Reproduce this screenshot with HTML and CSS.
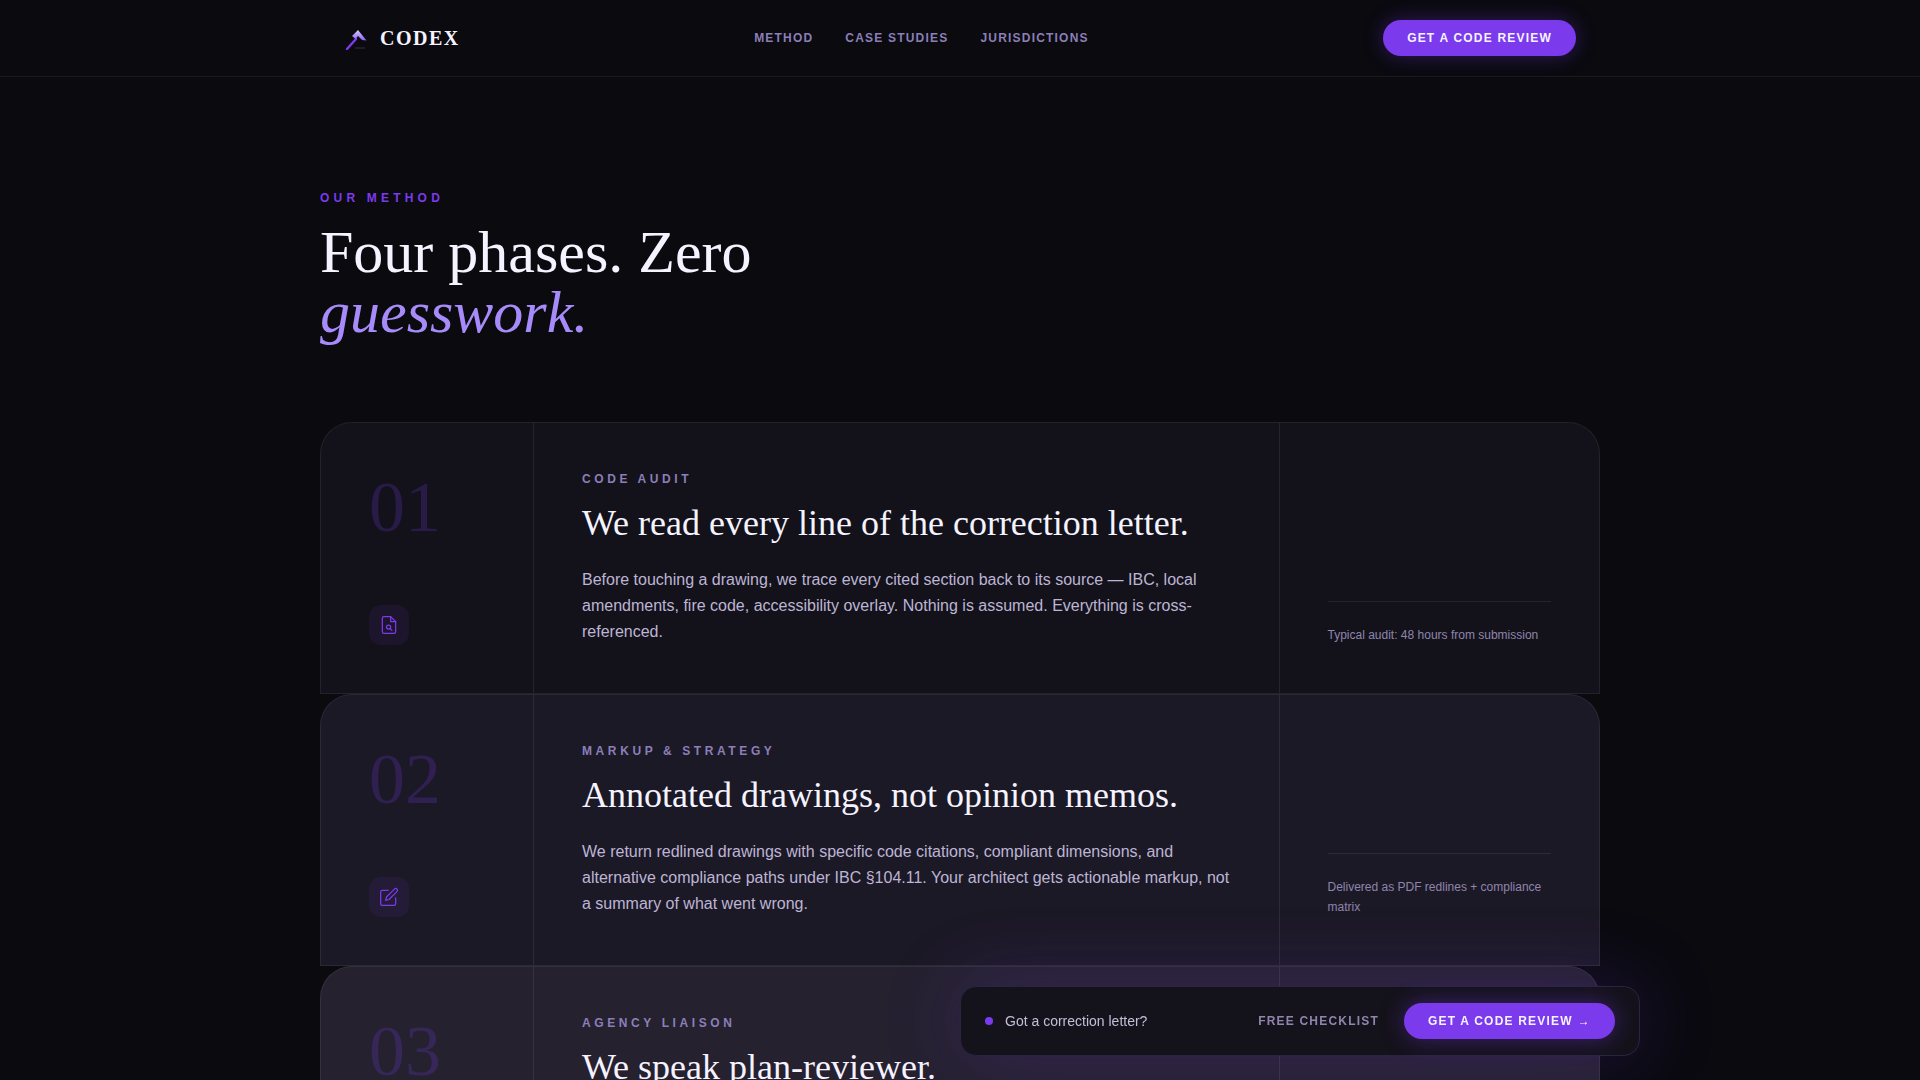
FILE: index.html
```html
<!DOCTYPE html>
<html lang="en">
<head>
<meta charset="utf-8">
<title>Codex — Our Method</title>
<link rel="stylesheet" href="styles.css">
</head>
<body>
<header class="site-header">
  <div class="header-inner">
    <a class="logo" href="#">
      <svg class="logo-mark" viewBox="0 0 24 24" width="24" height="24" fill="none" aria-hidden="true">
        <defs>
          <linearGradient id="logoGrad" x1="0" y1="0" x2="0" y2="1">
            <stop offset="0" stop-color="#d8ccff"/>
            <stop offset="1" stop-color="#8b5cf6"/>
          </linearGradient>
        </defs>
        <path d="M3 23 L12 13" stroke="#7c3aed" stroke-width="2.4" stroke-linecap="round"/>
        <path d="M8 10 L14 4 L22.5 14.5 L18 14 L14 10 L11.5 13 Z" fill="url(#logoGrad)"/>
        <path d="M11 22 H21" stroke="#2c2a38" stroke-width="1.2"/>
      </svg>
      <span class="logo-text">CODEX</span>
    </a>
    <nav class="nav">
      <a href="#">METHOD</a>
      <a href="#">CASE STUDIES</a>
      <a href="#">JURISDICTIONS</a>
    </nav>
    <a class="btn btn-header" href="#">GET A CODE REVIEW</a>
  </div>
</header>

<main class="method">
  <p class="eyebrow">OUR METHOD</p>
  <h1 class="headline">Four phases. Zero<br><em>guesswork.</em></h1>

  <div class="cards">
    <article class="card card-1">
      <div class="col-num">
        <div class="num">01</div>
        <div class="tile">
          <svg viewBox="0 0 24 24" width="20" height="20" fill="none" stroke="currentColor" stroke-width="1.5" stroke-linecap="round" stroke-linejoin="round" aria-hidden="true">
            <path d="M14 2H6a2 2 0 0 0-2 2v16a2 2 0 0 0 2 2h12a2 2 0 0 0 2-2V8z"/>
            <path d="M14 2v6h6"/>
            <circle cx="11.5" cy="14.5" r="2.5"/>
            <path d="M13.5 16.5 15.5 18.5"/>
          </svg>
        </div>
      </div>
      <div class="col-main">
        <div class="label">CODE AUDIT</div>
        <h2 class="title">We read every line of the correction letter.</h2>
        <p class="desc">Before touching a drawing, we trace every cited section back to its source — IBC, local amendments, fire code, accessibility overlay. Nothing is assumed. Everything is cross-referenced.</p>
      </div>
      <div class="col-note">
        <p class="note">Typical audit: 48 hours from submission</p>
      </div>
    </article>

    <article class="card card-2">
      <div class="col-num">
        <div class="num">02</div>
        <div class="tile">
          <svg viewBox="0 0 24 24" width="20" height="20" fill="none" stroke="currentColor" stroke-width="1.5" stroke-linecap="round" stroke-linejoin="round" aria-hidden="true">
            <path d="M11 4H4a2 2 0 0 0-2 2v14a2 2 0 0 0 2 2h14a2 2 0 0 0 2-2v-7"/>
            <path d="M18.5 2.5a2.12 2.12 0 0 1 3 3L12 15l-4 1 1-4z"/>
          </svg>
        </div>
      </div>
      <div class="col-main">
        <div class="label">MARKUP &amp; STRATEGY</div>
        <h2 class="title">Annotated drawings, not opinion memos.</h2>
        <p class="desc">We return redlined drawings with specific code citations, compliant dimensions, and alternative compliance paths under IBC §104.11. Your architect gets actionable markup, not a summary of what went wrong.</p>
      </div>
      <div class="col-note">
        <p class="note">Delivered as PDF redlines + compliance matrix</p>
      </div>
    </article>

    <article class="card card-3">
      <div class="col-num">
        <div class="num">03</div>
      </div>
      <div class="col-main">
        <div class="label">AGENCY LIAISON</div>
        <h2 class="title">We speak plan-reviewer.</h2>
      </div>
      <div class="col-note"></div>
    </article>
  </div>
</main>

<aside class="cta-bar">
  <span class="cta-dot"></span>
  <span class="cta-text">Got a correction letter?</span>
  <a class="cta-link" href="#">FREE CHECKLIST</a>
  <a class="btn btn-bar" href="#">GET A CODE REVIEW <span class="arrow">→</span></a>
</aside>
</body>
</html>
```

FILE: styles.css
```css
* { box-sizing: border-box; }
html, body { margin: 0; padding: 0; height: 100%; overflow: hidden; }
body {
  background: #0a0a0f;
  color: #fff;
  font-family: "Liberation Sans", Arial, sans-serif;
}
a { text-decoration: none; color: inherit; }

.site-header {
  height: 77px;
  border-bottom: 1px solid #1a1a22;
}
.header-inner {
  width: 1280px;
  height: 76px;
  margin: 0 auto;
  padding: 0 24px;
  display: flex;
  align-items: center;
  justify-content: space-between;
}
.logo { display: flex; align-items: center; gap: 12px; }
.logo-mark { display: block; }
.logo-text {
  font-family: "Liberation Serif", serif;
  font-weight: 700;
  font-size: 20px;
  letter-spacing: 1.5px;
  color: #f5f3ff;
}
.nav { display: flex; gap: 32px; }
.nav a {
  font-size: 12px;
  font-weight: 700;
  letter-spacing: 1.2px;
  color: #8b7fb8;
}
.btn {
  display: inline-flex;
  align-items: center;
  height: 36px;
  padding: 0 24px;
  border-radius: 18px;
  background: #7c3aed;
  color: #f5f3ff;
  font-size: 12px;
  font-weight: 700;
  letter-spacing: 1.2px;
  white-space: nowrap;
}
.btn-header { box-shadow: 0 0 20px rgba(124, 58, 237, 0.35); }
.btn-bar { box-shadow: 0 0 24px rgba(124, 58, 237, 0.4); }
.arrow { margin-left: 5px; font-size: 12px; }

.method {
  width: 1280px;
  margin: 0 auto;
  padding-top: 113px;
}
.eyebrow {
  margin: 0 0 16px;
  font-size: 12px;
  line-height: 16px;
  font-weight: 700;
  letter-spacing: 4.2px;
  color: #7c3aed;
}
.headline {
  margin: 0 0 80px;
  font-family: "Liberation Serif", serif;
  font-weight: 400;
  font-size: 60px;
  line-height: 60px;
  color: #f5f3ff;
}
.headline em { color: #a78bfa; font-style: italic; }

.cards { display: flex; flex-direction: column; }
.card {
  display: grid;
  grid-template-columns: 2fr 7fr 3fr;
  height: 272px;
  border: 1px solid rgba(255, 255, 255, 0.07);
  border-radius: 32px 32px 0 0;
  flex: none;
}
.card-1 { background: #13121a; }
.card-2 { background: #1c1926; }
.card-3 { background: #25212f; }

.col-num {
  padding: 48px;
  border-right: 1px solid rgba(255, 255, 255, 0.08);
  display: flex;
  flex-direction: column;
  justify-content: space-between;
  align-items: flex-start;
}
.num {
  font-family: "Liberation Serif", serif;
  font-size: 72px;
  line-height: 72px;
  color: rgba(124, 58, 237, 0.22);
}
.tile {
  width: 40px;
  height: 40px;
  border-radius: 12px;
  background: rgba(124, 58, 237, 0.09);
  color: #7c3aed;
  display: flex;
  align-items: center;
  justify-content: center;
}
.col-main {
  padding: 48px;
  border-right: 1px solid rgba(255, 255, 255, 0.08);
}
.label {
  margin-bottom: 16px;
  font-size: 12px;
  line-height: 16px;
  font-weight: 700;
  letter-spacing: 3.6px;
  color: #8b7fb8;
}
.title {
  margin: 0 0 24px;
  font-family: "Liberation Serif", serif;
  font-weight: 400;
  font-size: 36px;
  line-height: 40px;
  color: #f5f3ff;
}
.desc {
  margin: 0;
  font-size: 16px;
  line-height: 26px;
  color: #bdb5d5;
}
.col-note {
  padding: 48px;
  display: flex;
  flex-direction: column;
  justify-content: flex-end;
}
.note {
  margin: 0;
  padding-top: 24px;
  border-top: 1px solid rgba(255, 255, 255, 0.08);
  font-size: 12px;
  line-height: 19.5px;
  color: #8f85ad;
}

.cta-bar {
  position: fixed;
  right: 280px;
  bottom: 24px;
  width: 680px;
  height: 70px;
  padding: 0 24px;
  display: flex;
  align-items: center;
  border: 1px solid #2a2440;
  border-radius: 16px;
  background: #14121a;
  box-shadow: 0 0 80px rgba(124, 58, 237, 0.22);
}
.cta-dot {
  width: 8px;
  height: 8px;
  border-radius: 50%;
  background: #7c3aed;
  margin-right: 12px;
}
.cta-text {
  font-size: 14px;
  color: #c4bdd8;
  flex: 1;
}
.cta-link {
  font-size: 12px;
  font-weight: 700;
  letter-spacing: 1.2px;
  color: #8f85ad;
  margin-right: 25px;
}
```
